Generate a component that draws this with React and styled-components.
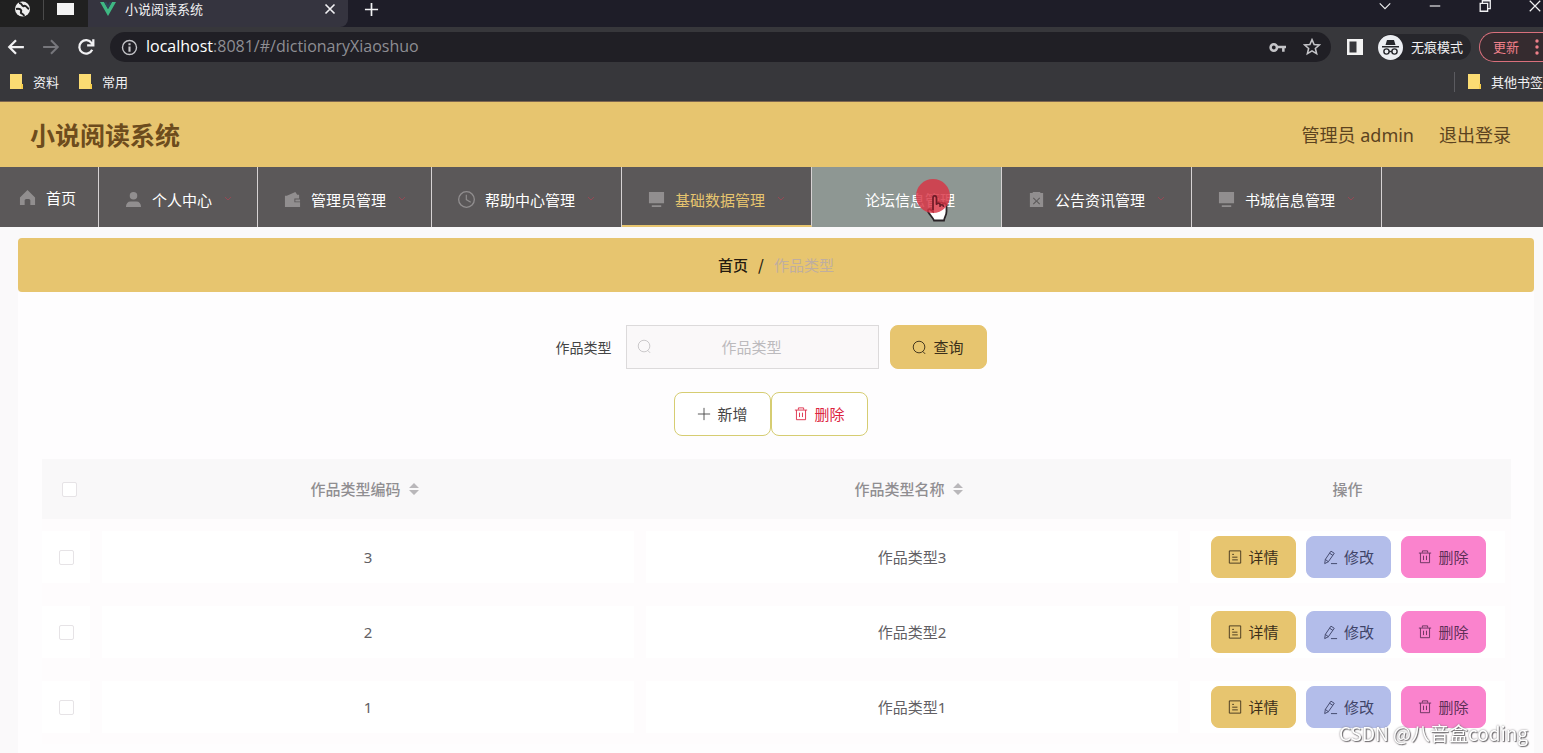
import React from "react";
import styled, { createGlobalStyle, css } from "styled-components";

const gold = "#e7c56f";
const sans = '"Noto Sans", "Noto Sans CJK SC", sans-serif';
const cjk = '"Noto Sans CJK SC", sans-serif';

const GlobalStyle = createGlobalStyle`
  *, *::before, *::after { box-sizing: border-box; }
  html { height: 100%; overflow: hidden; }
  body { margin: 0; min-height: 100%; background: #faf9fa; font-family: ${cjk}; font-size: 15px; line-height: 20px; }
  #root { min-width: 0; }
  button, input { font-family: inherit; font-size: inherit; line-height: inherit; margin: 0; }
  button { padding: 0; border: 0; background: none; color: inherit; cursor: pointer; }
  a { color: inherit; text-decoration: none; }
  svg { display: block; flex: none; }
`;

/* ---------- browser window ---------- */
const Chrome = styled.div`
  background: #37373b;
  color: #f1f1f3;
  font-size: 13px;
  border-bottom: 1px solid #7d6650;
  overflow: hidden;
`;
const TabStrip = styled.div`
  display: flex;
  height: 27px;
  background: #1e1d28;
`;
const PinnedTabs = styled.div`
  display: flex;
  width: 88px;
  background: #202020;
  padding-left: 14px;
  gap: 12px;
`;
const PinnedTab = styled.button`
  display: flex;
  height: 20px;
  & + & { border-left: 1px solid #4a4a4a; padding-left: 12px; }
`;
const ActiveTab = styled.div`
  display: flex;
  align-items: flex-start;
  width: 260px;
  padding: 0 12px;
  background: #35343f;
  border-radius: 0 0 8px 0;
`;
const TabTitle = styled.span`
  flex: 1;
  margin-left: 9px;
  line-height: 18px;
`;
const TabButton = styled.button`
  display: flex;
  height: 18px;
  align-items: center;
`;
const NewTab = styled(TabButton)`
  margin-left: 16px;
`;
const WindowButtons = styled.div`
  display: flex;
  margin-left: auto;
  gap: 36px;
  padding-right: 1px;
  height: 12px;
  align-items: center;
`;
const Toolbar = styled.div`
  display: flex;
  align-items: center;
  height: 40px;
  padding-left: 7px;
`;
const NavIcons = styled.div`
  display: flex;
  gap: 17px;
  margin-right: 15px;
`;
const Omnibox = styled.div`
  display: flex;
  align-items: center;
  flex: 1;
  min-width: 0;
  height: 30px;
  padding: 0 10px 0 11px;
  border-radius: 15px;
  background: #201f25;
  color: #c4c4c8;
`;
const Address = styled.div`
  flex: 1;
  min-width: 0;
  margin-left: 8px;
  padding-bottom: 2px;
  overflow: hidden;
  white-space: nowrap;
  font-family: "Open Sans", sans-serif;
  font-size: 16px;
  color: #8e8e93;
  b { font-weight: 400; color: #ffffff; }
`;
const OmniIcons = styled.div`
  display: flex;
  gap: 17px;
`;
const PanelButton = styled.button`
  margin: 0 15px 0 16px;
`;
const Incognito = styled.div`
  display: flex;
  align-items: center;
  gap: 8px;
  height: 26px;
  padding-right: 8px;
  margin-right: 8px;
  border-radius: 13px;
  background: #26262b;
  white-space: nowrap;
`;
const UpdateButton = styled.button`
  display: flex;
  align-items: center;
  justify-content: space-between;
  width: 64px;
  height: 30px;
  padding: 0 4px 0 13px;
  border: 1px solid #d9707c;
  border-right: 0;
  border-radius: 15px 0 0 15px;
  background: #352b2f;
  color: #f0808a;
`;
const Bookmarks = styled.div`
  display: flex;
  align-items: center;
  height: 34px;
  padding: 0 0 4px 10px;
  gap: 20px;
`;
const Bookmark = styled.a`
  display: flex;
  align-items: center;
  gap: 10px;
  white-space: nowrap;
`;
const OtherBookmarks = styled(Bookmark)`
  margin-left: auto;
  padding-left: 13px;
  border-left: 1px solid #5b5b60;
`;

/* ---------- site ---------- */
const Header = styled.header`
  display: flex;
  align-items: center;
  justify-content: space-between;
  height: 65px;
  padding: 0 32px 2px 30px;
  background: ${gold};
  color: #5c431f;
`;
const SiteTitle = styled.h1`
  margin: 0;
  font-size: 25px;
  line-height: 36px;
  font-weight: 700;
  color: #6d4c1d;
`;
const Account = styled.div`
  display: flex;
  gap: 25px;
  padding-top: 2px;
  font-family: ${sans};
  font-size: 18px;
  line-height: 26px;
`;
const Menu = styled.nav`
  display: flex;
  height: 60px;
  background: #5b5859;
  color: #ffffff;
`;
const MenuItem = styled.a`
  position: relative;
  display: flex;
  align-items: center;
  padding: 5px ${(p) => (p.$long ? 27 : 26)}px 0 26px;
  border-right: 1px solid #d6d2d3;
  white-space: nowrap;
  ${(p) => p.$home && css`padding: 1px 22px 0 19px;`}
  ${(p) => p.$active && css`color: ${gold}; border-bottom: 2px solid ${gold}; padding-top: 7px;`}
  ${(p) => p.$hover && css`background: #8e9793;`}
`;
const MenuIcon = styled.span`
  display: flex;
  width: 18px;
  margin-right: 9px;
  color: #918e8f;
`;
const MenuArrow = styled.span`
  display: flex;
  width: 8px;
  margin: 0 0 4px 12px;
  margin-right: -1px;
  color: ${(p) => (p.$hover ? "#8e9793" : "#944955")};
`;
const Pointer = styled.span`
  position: absolute;
  left: 104px;
  top: 11px;
  color: #d93344;
`;

const Page = styled.main`
  padding: 11px 9px 0 18px;
`;
const Breadcrumb = styled.div`
  display: flex;
  align-items: center;
  justify-content: center;
  gap: 10px;
  height: 54px;
  border-radius: 4px;
  background: ${gold};
  color: #241a10;
  font-weight: 500;
`;
const Crumb = styled.span`
  color: #bfaea0;
  font-weight: 400;
`;
const Panel = styled.section`
  padding: 33px 23px 40px 24px;
  background: #fefdfe;
`;
const ControlRow = styled.div`
  display: flex;
  align-items: center;
  justify-content: center;
  padding-right: 11px;
  margin-bottom: 23px;
`;
const SearchLabel = styled.label`
  margin-right: 14px;
  font-size: 14px;
  color: #444;
`;
const SearchField = styled.div`
  display: flex;
  align-items: center;
  width: 253px;
  height: 44px;
  margin-right: 11px;
  padding: 0 26px 2px 10px;
  border: 1px solid #dcdadb;
  background: #faf8f9;
  color: #c6c4c6;
`;
const SearchInput = styled.input`
  flex: 1;
  min-width: 0;
  height: 40px;
  border: 0;
  padding: 0;
  outline: 0;
  background: transparent;
  text-align: center;
  color: #555;
  &::placeholder { color: #bcbabd; opacity: 1; }
`;
const tones = {
  gold: [gold, gold, "#3b2f1a"],
  blue: ["#b3bdea", "#b3bdea", "#3f4468"],
  pink: ["#fa83cd", "#fa83cd", "#5f2f57"],
  plain: ["#ffffff", "#d6cd72", "#444444"],
  danger: ["#ffffff", "#d6cd72", "#dc2340"],
};
const Button = styled.button`
  display: flex;
  align-items: center;
  justify-content: center;
  gap: 6px;
  width: ${(p) => (p.$compact ? 85 : 97)}px;
  height: ${(p) => (p.$compact ? 42 : 44)}px;
  border: 1px solid ${(p) => tones[p.$tone][1]};
  border-radius: 8px;
  background: ${(p) => tones[p.$tone][0]};
  color: ${(p) => tones[p.$tone][2]};
`;
const Table = styled.table`
  width: 100%;
  table-layout: fixed;
  border-collapse: collapse;
  color: #626064;
  text-align: center;
`;
const HeadCell = styled.th`
  height: 60px;
  padding: 0;
  width: ${(p) => p.$width || "auto"};
  background: #f9f8f9;
  color: #908e91;
  font-weight: 500;
`;
const SortLabel = styled.span`
  display: flex;
  align-items: center;
  justify-content: center;
  gap: 8px;
  padding-right: 7px;
`;
const Cell = styled.td`
  height: 75px;
  padding: 1px 6px 0;
  padding-left: ${(p) => (p.$check ? 0 : 6)}px;
  background: #fefcfd;
`;
const CellBody = styled.div`
  display: flex;
  align-items: center;
  justify-content: center;
  gap: 10px;
  height: 52px;
  background: #ffffff;
  font-family: ${sans};
`;
const Actions = styled(CellBody)`
  padding-left: 2px;
  font-family: ${cjk};
`;
const Check = styled.input`
  appearance: none;
  display: block;
  width: 15px;
  height: 15px;
  margin: 0 auto;
  border: 1px solid #e6e3e6;
  border-radius: 2px;
  background: #ffffff;
`;
const Watermark = styled.div`
  position: fixed;
  right: 15px;
  bottom: 6px;
  font-size: 19px;
  line-height: 28px;
  color: #ffffff;
  text-shadow: 1px 1px 1px #6e6b6e, 0 0 2px #777477;
`;

/* ---------- drawings ---------- */
const Svg = ({ s = 16, w = s, h = s, box = "0 0 16 16", sw = 1, children, fill = "none" }) => (
  <svg width={w} height={h} viewBox={box} fill={fill} stroke={fill === "none" ? "currentColor" : "none"} strokeWidth={sw} aria-hidden="true">
    {children}
  </svg>
);
const Search = () => <Svg s={15}><circle cx="7.5" cy="7.5" r="6.2" /><path d="M11.5 12.2 14 14.8" /></Svg>;
const Plus = () => <Svg s={14}><path d="M8 1v14M1 8h14" /></Svg>;
const Trash = () => <Svg s={14}><path d="M1 3.5h14M5 3V1h6v2M2.8 3.5v11h10.4v-11M6.3 6.5v5M9.7 6.5v5" /></Svg>;
const Doc = () => <Svg s={14}><path d="M1.500 1h13v14h-13zM4.8 5h2M4.8 8.2h6M4.8 11.3h6.4" /></Svg>;
const Edit = () => <Svg s={15}><path d="m8.500 1.200 3.500 2.300-6.300 9-3.900 2 .7-4.500zM2.500 10l3.200 2.500M7 3.400l3.500 2.300M8.500 14.500H15" /></Svg>;
const Folder = () => (
  <svg width="13" height="16" viewBox="0 0 13 16" aria-hidden="true">
    <path d="M0 0h12v10h1v5H0z" fill="#fbdc73" /><path d="M11 10h2v5h-2z" fill="#f6ce4c" />
  </svg>
);
const Sort = () => <Svg w={10} h={12} box="0 0 10 12" fill="#b9b7ba"><path d="M5 0l5 5H0zM0 7h10l-5 5z" /></Svg>;
const Chevron = () => <Svg s={8} box="0 0 8 8" sw={1}><path d="M1 3l3 3 3-3" /></Svg>;

const menuIcons = {
  home: <path d="M9 1 1 9v8h5v-5c0-2 6-2 6 0v5h5V9z" />,
  user: <path d="M9 1a4 4 0 1 0 0 8 4 4 0 0 0 0-8zM1 17c0-4 2-6 5-6h6c3 0 5 2 5 6z" />,
  wallet: <path d="M3 5 12 1l2 3h2v4h-5v4h6v5H1V5zM12 9h5v2h-5z" />,
  clock: <path fillRule="evenodd" d="M9 0a9 9 0 1 0 0 18A9 9 0 0 0 9 0zm0 1.4a7.6 7.6 0 1 1 0 15.2A7.6 7.6 0 0 1 9 1.4zM8.2 4v5.4l5 3 .6-1-4.4-2.6V4z" />,
  monitor: <path d="M1 1h16v12H1zM4 15h10v2H4z" />,
  clip: <path fillRule="evenodd" d="M2 2h3V1h8v1h3v15H2zm4 5-.8.8L8.2 10.500l-3 3 .8.8 3-3 3 3 .8-.8-3-3 3-2.700L12 7 9 10z" />,
};

const Hand = () => (
  <svg width="48" height="46" viewBox="0 0 48 46" aria-hidden="true">
    <path d="M17 20c0-3 3.500-3 3.500 0v6c0-2.500 3.500-2.500 3.500 0 0-2 3.500-2 3.500.5 0-2 3-1.500 3 1v6c0 4-2 5-2.500 9H18c-1-3-4-5-6-9-.7-2.500 2.500-3 3.500-1l1.500 1z" fill="#fff" stroke="#292326" strokeWidth="1.800" />
    <circle cx="17" cy="18" r="17" fill="currentColor" fillOpacity="0.82" />
    <path d="M17 32V20c0-3 3.500-3 3.500 0v7c0-2.500 3.500-2.500 3.500 0v2c0-3 3.500-3 3.500 0" fill="none" stroke="#6b1d29" strokeWidth="1.500" />
  </svg>
);

const menu = [
  ["首页", "home"], ["个人中心", "user"], ["管理员管理", "wallet"], ["帮助中心管理", "clock"],
  ["基础数据管理", "monitor"], ["论坛信息管理", null], ["公告资讯管理", "clip"], ["书城信息管理", "monitor"],
];
const rows = [["3", "作品类型3"], ["2", "作品类型2"], ["1", "作品类型1"]];

function BrowserBar() {
  return (
    <Chrome>
      <TabStrip>
        <PinnedTabs>
          <PinnedTab aria-label="网页">
            <svg width="17" height="18" viewBox="0 0 17 18"><circle cx="8.500" cy="9" r="7.500" fill="#eee" /><path d="M5 3c4 0 2 4 5 3 2-1 3 2 5 3M2 9c4-1 6 1 5 3s3 1 3 4" fill="none" stroke="#222" strokeWidth="2" /></svg>
          </PinnedTab>
          <PinnedTab aria-label="页面">
            <svg width="19" height="18" viewBox="0 0 19 18"><path d="M1 3h17v12H1z" fill="#f3f3f3" /></svg>
          </PinnedTab>
        </PinnedTabs>
        <ActiveTab>
          <svg width="16" height="18" viewBox="0 0 16 18"><path d="M0 2h4l4 7 4-7h4L8 16z" fill="#3fb883" /><path d="M4 2h2.500L8 5l1.500-3H12L8 9z" fill="#2f4658" /></svg>
          <TabTitle>小说阅读系统</TabTitle>
          <TabButton aria-label="关闭标签页"><Svg s={12} sw={2.2}><path d="m2 2 12 12M14 2 2 14" /></Svg></TabButton>
        </ActiveTab>
        <NewTab aria-label="新标签页"><Svg s={15} sw={1.800}><path d="M8 1v14M1 8h14" /></Svg></NewTab>
        <WindowButtons>
          <TabButton aria-label="搜索标签页"><Svg s={14} sw={1.3}><path d="m2 5 6 6 6-6" /></Svg></TabButton>
          <TabButton aria-label="最小化"><Svg s={14} sw={1.3}><path d="M2 8h12" /></Svg></TabButton>
          <TabButton aria-label="还原"><Svg s={14} sw={1.5}><path d="M2.500 5h8.500v9H2.500zM5 5V2h9v9h-3" /></Svg></TabButton>
          <TabButton aria-label="关闭"><Svg s={14} sw={1.400}><path d="m2 2 12 12M14 2 2 14" /></Svg></TabButton>
        </WindowButtons>
      </TabStrip>
      <Toolbar>
        <NavIcons>
          <button aria-label="后退"><Svg s={18} sw={2}><path d="M15 8H2M8 2 2 8l6 6" /></Svg></button>
          <button aria-label="前进" disabled><Svg s={18} sw={1.800}><path stroke="#77777c" d="M1 8h13M8 2l6 6-6 6" /></Svg></button>
          <button aria-label="重新加载"><Svg s={18} sw={2}><path d="M13.500 10.500A6 6 0 1 1 13 4.500L14.500 6M14.500 1v5.500H9" /></Svg></button>
        </NavIcons>
        <Omnibox>
          <Svg s={17} sw={1.3}><circle cx="8" cy="8" r="6.600" /><path strokeWidth="2" d="M8 7v5M8 4v1.800" /></Svg>
          <Address><b>localhost</b>:8081/#/dictionaryXiaoshuo</Address>
          <OmniIcons>
            <button aria-label="密码"><Svg s={17} sw={2.400}><circle cx="4.500" cy="8" r="3" /><path d="M7.500 7.500H16M13.500 8v4" /></Svg></button>
            <button aria-label="收藏"><Svg s={18} sw={1.400}><path d="m8 1.500 1.900 4.300 4.600.4L11 9.300l1.100 4.600L8 11.500l-4.100 2.400L5 9.300 1.500 6.200l4.600-.4z" /></Svg></button>
          </OmniIcons>
        </Omnibox>
        <PanelButton aria-label="侧边栏"><Svg s={16} fill="#f3f3f3"><path fillRule="evenodd" d="M0 0h16v16H0zm2.500 2.500v11h7v-11z" /></Svg></PanelButton>
        <Incognito>
          <svg width="25" height="25" viewBox="0 0 25 25" aria-hidden="true"><circle cx="12.500" cy="12.500" r="12.500" fill="#eceef2" /><path d="M9 5h7l1.500 5H7.500zM4 11h17v1.500H4z" fill="#25262b" /><path d="M11 16.500h3" stroke="#25262b" strokeWidth="1.400" /><circle cx="8.500" cy="16.500" r="2.600" fill="none" stroke="#25262b" strokeWidth="1.400" /><circle cx="16.500" cy="16.500" r="2.600" fill="none" stroke="#25262b" strokeWidth="1.400" /></svg>
          无痕模式
        </Incognito>
        <UpdateButton>
          更新
          <Svg w={4} h={16} box="0 0 4 16" fill="#f0808a"><circle cx="2" cy="2" r="1.700" /><circle cx="2" cy="8" r="1.700" /><circle cx="2" cy="14" r="1.700" /></Svg>
        </UpdateButton>
      </Toolbar>
      <Bookmarks>
        <Bookmark href="#"><Folder />资料</Bookmark>
        <Bookmark href="#"><Folder />常用</Bookmark>
        <OtherBookmarks href="#"><Folder />其他书签</OtherBookmarks>
      </Bookmarks>
    </Chrome>
  );
}

function MenuEntry({ label, icon }) {
  const home = icon === "home";
  const hover = !icon;
  return (
    <MenuItem href="#" $home={home} $long={label.length > 5} $active={label === "基础数据管理"} $hover={hover}>
      <MenuIcon>{icon && <Svg s={17} box="0 0 18 18" fill="currentColor">{menuIcons[icon]}</Svg>}</MenuIcon>
      {label}
      {!home && <MenuArrow $hover={hover}><Chevron /></MenuArrow>}
      {hover && <Pointer><Hand /></Pointer>}
    </MenuItem>
  );
}

export default function App() {
  return (
    <>
      <GlobalStyle />
      <BrowserBar />
      <Header>
        <SiteTitle>小说阅读系统</SiteTitle>
        <Account><span>管理员 admin</span><a href="#">退出登录</a></Account>
      </Header>
      <Menu>{menu.map(([label, icon]) => <MenuEntry key={label} label={label} icon={icon} />)}</Menu>
      <Page>
        <Breadcrumb><a href="#">首页</a><span>/</span><Crumb>作品类型</Crumb></Breadcrumb>
        <Panel>
          <ControlRow>
            <SearchLabel htmlFor="type">作品类型</SearchLabel>
            <SearchField><Search /><SearchInput id="type" placeholder="作品类型" /></SearchField>
            <Button $tone="gold"><Search />查询</Button>
          </ControlRow>
          <ControlRow>
            <Button $tone="plain"><Plus />新增</Button>
            <Button $tone="danger"><Trash />删除</Button>
          </ControlRow>
          <Table>
            <thead>
              <tr>
                <HeadCell $width="54px"><Check type="checkbox" aria-label="全选" /></HeadCell>
                <HeadCell><SortLabel>作品类型编码<Sort /></SortLabel></HeadCell>
                <HeadCell><SortLabel>作品类型名称<Sort /></SortLabel></HeadCell>
                <HeadCell $width="327px">操作</HeadCell>
              </tr>
            </thead>
            <tbody>
              {rows.map(([code, name]) => (
                <tr key={code}>
                  <Cell $check><CellBody><Check type="checkbox" aria-label={"选择" + name} /></CellBody></Cell>
                  <Cell><CellBody>{code}</CellBody></Cell>
                  <Cell><CellBody>{name}</CellBody></Cell>
                  <Cell>
                    <Actions>
                      <Button $compact $tone="gold"><Doc />详情</Button>
                      <Button $compact $tone="blue"><Edit />修改</Button>
                      <Button $compact $tone="pink"><Trash />删除</Button>
                    </Actions>
                  </Cell>
                </tr>
              ))}
            </tbody>
          </Table>
        </Panel>
      </Page>
      <Watermark>CSDN @八音盒coding</Watermark>
    </>
  );
}
